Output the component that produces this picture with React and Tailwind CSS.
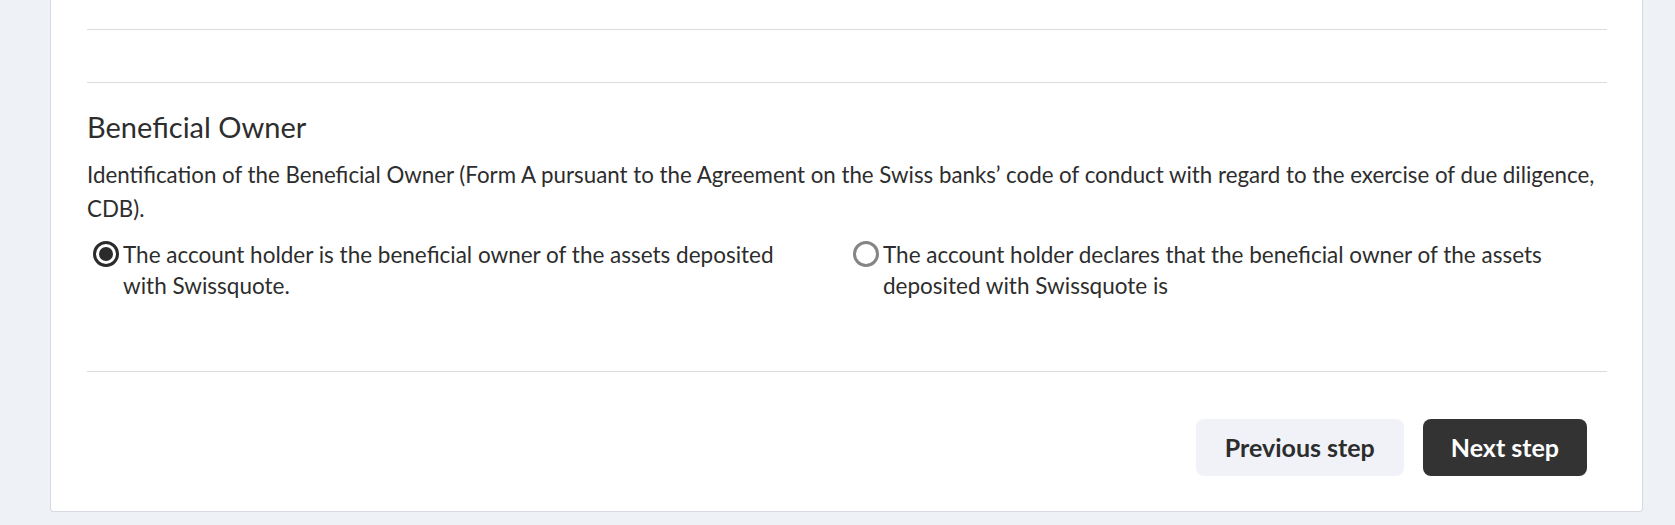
import React, { useState } from 'react';

const options = [
  {
    id: 'self',
    label: 'The account holder is the beneficial owner of the assets deposited with Swissquote.',
  },
  {
    id: 'other',
    label: 'The account holder declares that the beneficial owner of the assets deposited with Swissquote is',
  },
];

const Radio = ({ checked }) => (
  <span
    className={`mt-[2px] flex h-[26px] w-[26px] shrink-0 items-center justify-center rounded-full border-[3px] ${
      checked ? 'border-[#2b2b2b]' : 'border-[#858585]'
    }`}
  >
    {checked && <span className="block h-[14px] w-[14px] rounded-full bg-[#2b2b2b]" />}
  </span>
);

const App = () => {
  const [owner, setOwner] = useState('self');

  return (
    <div
      className="min-h-[525px] bg-[#eef1f6] pb-[14px] text-[#2d2d2d]"
      style={{ fontFamily: 'Lato, "Noto Sans", sans-serif' }}
    >
      <div className="ml-[50px] mr-[32px] rounded-b-[4px] border-x border-b border-[#d6d9df] bg-white pl-[36px] pr-[35px] pb-[35px]">
        {/* tail of the previous section */}
        <div className="h-[30px] border-b border-[#dcdcdc]" />
        <div className="h-[53px] border-b border-[#dcdcdc]" />

        {/* Beneficial owner */}
        <div className="border-b border-[#dcdcdc] pt-[26px] pb-[70px]">
          <h2 className="text-[29px] leading-[36px] font-normal">Beneficial Owner</h2>
          <p className="mt-[13px] text-[22.3px] leading-[34px]">
            Identification of the Beneficial Owner (Form A pursuant to the Agreement on the Swiss banks’ code of conduct with regard to the exercise of due diligence, CDB).
          </p>
          <div className="mt-[13px] grid grid-cols-2">
            {options.map((opt) => (
              <label
                key={opt.id}
                className="flex cursor-pointer items-start gap-[4px] pl-[6px] pr-[40px]"
                onClick={() => setOwner(opt.id)}
              >
                <Radio checked={owner === opt.id} />
                <span className="text-[22.5px] leading-[31px]">{opt.label}</span>
              </label>
            ))}
          </div>
        </div>

        {/* footer buttons */}
        <div className="flex justify-end gap-[19px] pt-[47px] pr-[20px]">
          <button className="h-[57px] rounded-[8px] bg-[#f0f2f8] px-[29px] text-[25px] font-bold text-[#2d2d2d]">
            Previous step
          </button>
          <button className="h-[57px] rounded-[8px] bg-[#333333] px-[28px] text-[25px] font-bold text-white">
            Next step
          </button>
        </div>
      </div>
    </div>
  );
};

export default App;
